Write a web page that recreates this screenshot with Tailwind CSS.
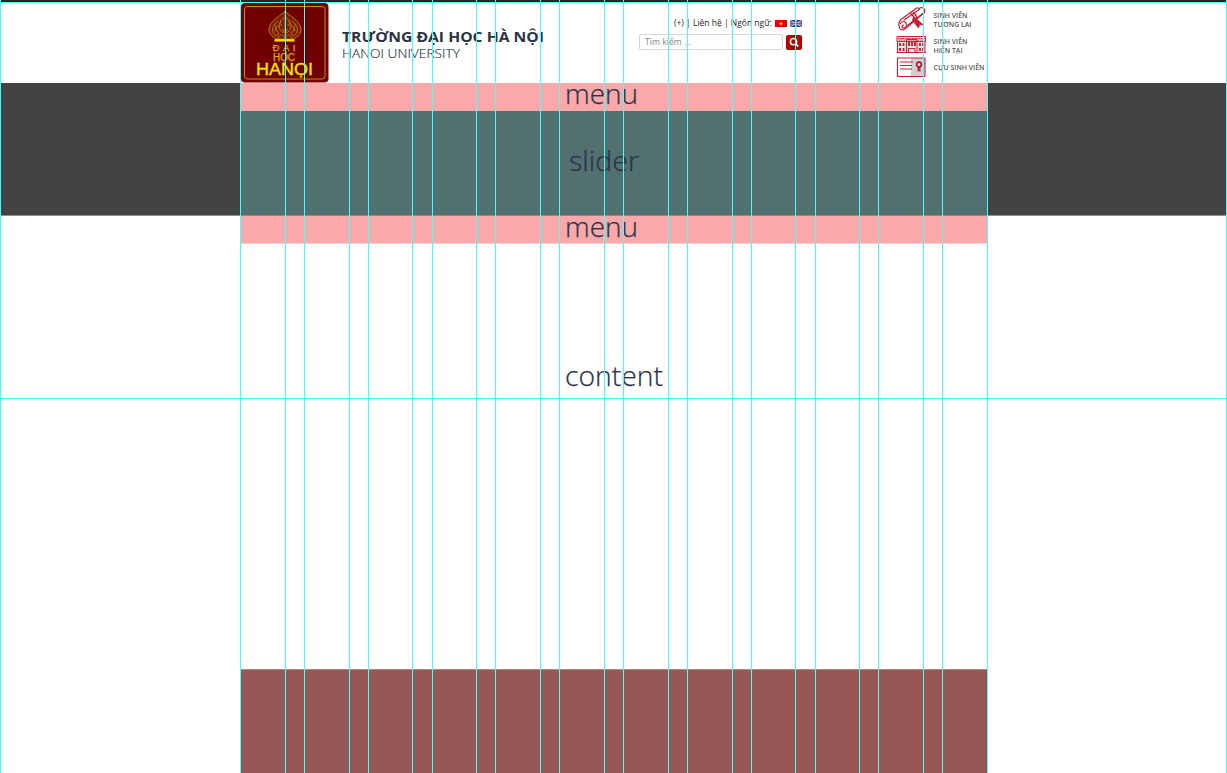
<!DOCTYPE html>
<html lang="vi">
<head>
<meta charset="utf-8">
<title>Trường Đại học Hà Nội</title>
<script src="https://cdn.jsdelivr.net/npm/@tailwindcss/browser@4"></script>
</head>
<body class="relative h-[773px] w-[1227px] overflow-hidden bg-white font-['Open_Sans',sans-serif] text-[#2b3345]">
<div class="h-[3px] bg-[#262626]"></div>
<header class="ml-[240px] flex h-20 w-[748px]">
  <svg class="h-20 w-[89px] shrink-0" viewBox="0 0 89 80" font-family="Liberation Sans, sans-serif" text-anchor="middle">
    <rect x="1" y="0" width="87.500" height="79.500" rx="4" fill="#700000"/>
    <rect x="4.500" y="3.500" width="80.500" height="72.500" rx="3" fill="none" stroke="#c88a08"/>
    <g fill="none" stroke="#c07818" stroke-width="1">
      <path d="M45 8C41 13 30 17 29 26C29 32 34 35 38 36H52C56 35 61 32 61 26C60 17 49 13 45 8Z" fill="#7c1c04"/>
      <path d="M45 9V36M45 14C39 18 37 25 42 29C44 31 45 27 42 26M45 14C51 18 53 25 48 29C46 31 45 27 48 26M38 18C32 22 31 29 35 32C38 34 40 30 37 28C34 26 37 22 40 23M52 18C58 22 59 29 55 32C52 34 50 30 53 28C56 26 53 22 50 23M38 35C40 31 43 31 45 35C47 31 50 31 52 35"/>
      <path d="M34 21Q38 24 35 28M56 21Q52 24 55 28M41 17Q39 21 42 23M49 17Q51 21 48 23"/>
    </g>
    <path d="M34.500 37.300H54.500" stroke="#f4df00" stroke-width="2.500"/>
    <g fill="#e0aa18" stroke="#e0aa18" stroke-width=".25">
      <text x="44" y="48" font-size="9.500" textLength="23">Đ Ạ I</text>
      <text x="44" y="57.500" font-size="10" textLength="22" lengthAdjust="spacingAndGlyphs">HỌC</text>
    </g>
    <text x="44.500" y="71.500" font-size="16" fill="#f6e600" stroke="#f6e600" stroke-width=".3" textLength="57" lengthAdjust="spacingAndGlyphs">HANỌI</text>
  </svg>
  <div class="ml-3 w-[298px] pt-[23px]">
    <svg class="h-10 w-[230px] overflow-visible" fill="#2b3345">
      <text x="1" y="15.500" font-size="14.500" font-weight="700" textLength="202" lengthAdjust="spacingAndGlyphs">TRƯỜNG ĐẠI HỌC HÀ NỘI</text>
      <text x="1" y="32" font-size="12.300" font-weight="300" stroke="#2b3345" stroke-width=".15" textLength="118" lengthAdjust="spacingAndGlyphs">HANOI UNIVERSITY</text>
    </svg>
  </div>
  <div class="w-[163px] pt-3">
    <div class="flex h-4 items-center justify-end gap-[3px]">
      <svg class="h-4 w-[100px] overflow-visible" fill="#1f2329"><text x="2" y="11" font-size="8.500" textLength="98" lengthAdjust="spacingAndGlyphs">(+) | Liên hệ | Ngôn ngữ:</text></svg>
      <svg class="h-[7px] w-3" viewBox="0 0 12 7"><rect width="12" height="7" fill="#e80000"/><path d="M6 1.500L6.600 3H8L6.900 4L7.400 5.500L6 4.600L4.600 5.500L5.100 4L4 3H5.400Z" fill="#ffe600"/></svg>
      <svg class="h-[7px] w-3" viewBox="0 0 12 7"><rect width="12" height="7" fill="#303487"/><path d="M0 0L12 7M12 0L0 7" stroke="#b5a5cf" stroke-width="1.100"/><path d="M6 0V7M0 3.500H12" stroke="#d5d0e0" stroke-width="1.800"/><path d="M6 0V7M0 3.500H12" stroke="#c44360"/></svg>
    </div>
    <div class="mt-[3px] flex h-4 items-start gap-[3px]">
      <div class="flex h-4 w-[144px] items-center rounded-[2px] border border-[#d8d8d8]">
        <svg class="h-4 w-20 overflow-visible" fill="#888"><text x="5" y="11" font-size="8.500" textLength="46" lengthAdjust="spacingAndGlyphs">Tìm kiếm ...</text></svg>
      </div>
      <svg class="mt-px h-[15px] w-4" viewBox="0 0 16 15"><rect width="16" height="15" rx="2" fill="#b60000"/><circle cx="7.500" cy="6.700" r="3.100" fill="none" stroke="#fff" stroke-width="1.500"/><path d="M10 9.200L12.300 11.500" stroke="#fff" stroke-width="1.800"/></svg>
    </div>
  </div>
  <svg class="ml-[90px] h-20 w-24 shrink-0" viewBox="892 3 96 80">
    <g fill="none" stroke="#c91f35" stroke-width="1.200" stroke-linejoin="round">
      <path d="M901 19.500L916 8.500Q917 7 919 8.500L921 7.500Q926 8 924.500 12.500L905.500 28.500Q901.500 31.500 899.500 28Q897.500 22.500 901 19.500Z"/>
      <path d="M900 24Q903 19.500 906 23Q907.500 27 904 28Q901 28 902.500 25.500L904 25M904 20L920 9M907.500 25.500L924 12.500"/>
      <path d="M910.500 13.500Q915 16 914.500 22M913 12Q918 16 916 21" stroke-width="1.500"/>
      <path d="M914 17L923.500 25L919.500 24.500L918.500 28L912.500 20Z" stroke-width="1" fill="#c91f35"/>
    </g>
    <g fill="none" stroke="#c91f35" stroke-width="1">
      <path d="M897 36.500H925.500V41.500H897ZM897.500 41.500V52.500H925V41.500M896.500 52.500H926" fill="#f8e0e3"/>
      <path d="M898 38.500H925M899 40H924" stroke-dasharray="1.500 .8"/>
      <path d="M900 43V46M903.500 43V46M900 48V51M903.500 48V51M909 42V46M912 42V46M915 42V46M920 43V46M923 43V46M920 48V51M923 48V51" stroke-width="1.900"/>
      <path d="M906.500 52V39.500H917V52M908.500 52V48.500H915V52"/>
    </g>
    <rect x="911" y="58" width="14" height="18" fill="#d0d0d0"/>
    <path d="M897.500 58H925V76.500H897.500ZM900 62H913M900 65.500H912M900 69H912" fill="none" stroke="#c91f35" stroke-width="1.100"/>
    <path d="M917.500 66V72L919 71L920.500 72V66" fill="#c91f35"/><circle cx="919" cy="64.500" r="2.300" fill="#fff" stroke="#bd1028" stroke-width="1.700"/>
    <g fill="#555" font-size="6.700" font-weight="600">
      <text x="933.500" y="18" textLength="34" lengthAdjust="spacingAndGlyphs">SINH VIÊN</text>
      <text x="933.500" y="27" textLength="38" lengthAdjust="spacingAndGlyphs">TƯƠNG LAI</text>
      <text x="933.500" y="44" textLength="34" lengthAdjust="spacingAndGlyphs">SINH VIÊN</text>
      <text x="933.500" y="53" textLength="29" lengthAdjust="spacingAndGlyphs">HIỆN TẠI</text>
      <text x="933.500" y="69.500" textLength="51" lengthAdjust="spacingAndGlyphs">CỰU SINH VIÊN</text>
    </g>
  </svg>
</header>
<section class="h-[132px] bg-[#434343]">
  <div class="ml-[240px] w-[748px]">
    <div class="h-7 bg-[#f9a9aa]"><svg class="h-7 w-full overflow-visible font-light" fill="#2b3345" stroke="#2b3345" stroke-width=".25"><text x="325" y="21" font-size="28" textLength="73" lengthAdjust="spacingAndGlyphs">menu</text></svg></div>
    <div class="h-[104px] bg-[#52706f]"><svg class="h-[104px] w-full font-light" fill="#2b3345" stroke="#2b3345" stroke-width=".25"><text x="329" y="60" font-size="28" textLength="70" lengthAdjust="spacingAndGlyphs">slider</text></svg></div>
  </div>
</section>
<div class="h-px bg-[#929292]"><div class="ml-[240px] h-px w-[748px] bg-[#a78080]"></div></div>
<main class="ml-[240px] w-[748px]">
  <div class="h-7 border-b border-b-[#fdd0d0] bg-[#f9a9aa]"><svg class="h-[27px] w-full overflow-visible font-light" fill="#2b3345" stroke="#2b3345" stroke-width=".25"><text x="325" y="21" font-size="28" textLength="73" lengthAdjust="spacingAndGlyphs">menu</text></svg></div>
  <div class="h-[425px]"><svg class="h-[200px] w-full font-light" fill="#2b3345" stroke="#2b3345" stroke-width=".25"><text x="325" y="142" font-size="28" textLength="98" lengthAdjust="spacingAndGlyphs">content</text></svg></div>
  <div class="h-[104px] border-t border-t-[#b58787] bg-[#965656]"></div>
</main>
<svg class="pointer-events-none absolute inset-0 h-[773px] w-[1227px]" viewBox="0 0 1227 773" fill="none" stroke="#45ffff" shape-rendering="crispEdges">
  <path d="M0 2.500H1227M0 398.500H1227M.5 0V773M240.500 0V773M285.500 0V773M304.500 0V773M349.500 0V773M368.500 0V773M412.500 0V773M432.500 0V773M476.500 0V773M495.500 0V773M540.500 0V773M559.500 0V773M604.500 0V773M623.500 0V773M668.500 0V773M687.500 0V773M732.500 0V773M751.500 0V773M795.500 0V773M815.500 0V773M859.500 0V773M878.500 0V773M923.500 0V773M942.500 0V773M987.500 0V773M1226.500 0V773"/>
</svg>
</body>
</html>
